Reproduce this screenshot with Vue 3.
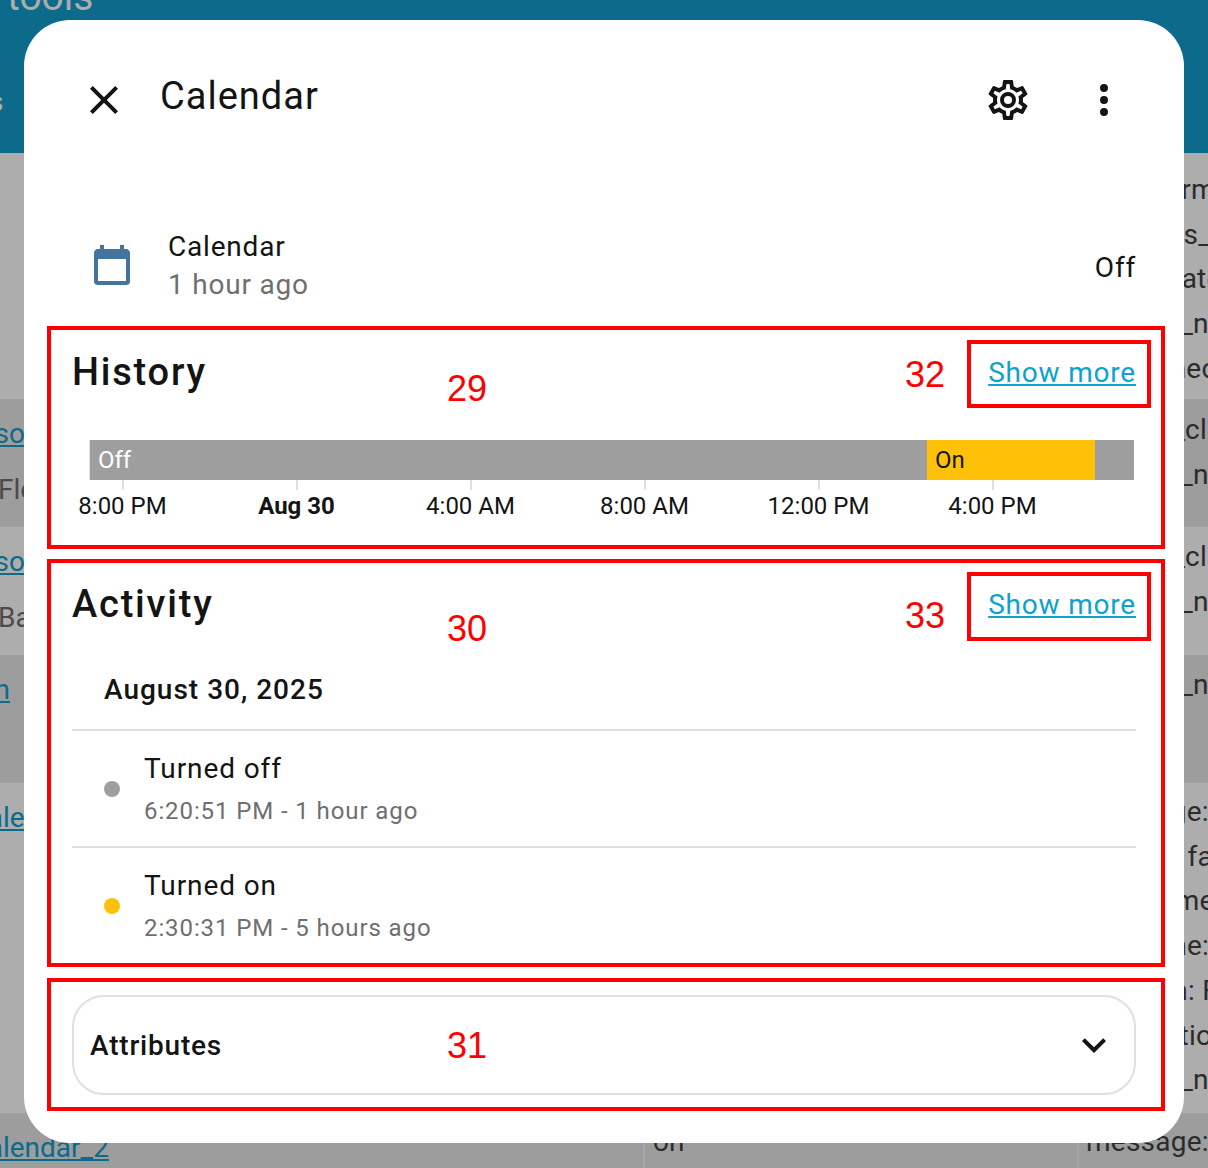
<template>
  <div class="page">
    <!-- page behind the dialog -->
    <header class="top">
      <div class="top-title">tools</div>
      <div class="top-tab">s</div>
    </header>
    <div class="rows">
      <div v-for="(row, i) in rows" :key="i" class="row" :class="{ alt: row.alt }" :style="{ height: row.height + 'px' }">
        <div class="cell first">
          <a class="bg-link">{{ row.link }}</a>
          <div class="bg-name">{{ row.name }}</div>
        </div>
        <div class="cell second" :style="{ paddingTop: row.pad + 'px' }">{{ row.state }}</div>
        <div class="cell third" :style="{ paddingTop: row.pad + 'px' }">
          <div v-for="line in row.attrs" :key="line">{{ line }}</div>
        </div>
      </div>
    </div>

    <!-- dialog -->
    <section class="dialog">
      <div class="dialog-head">
        <svg class="icon close" viewBox="0 0 24 24"><path :d="icons.close" /></svg>
        <div class="dialog-title">Calendar</div>
        <svg class="icon gear" viewBox="0 0 24 24"><path :d="icons.cog" /></svg>
        <svg class="icon dots" viewBox="0 0 24 24"><path :d="icons.dots" /></svg>
      </div>

      <div class="state-row">
        <svg class="icon cal" viewBox="0 0 24 24"><path :d="icons.calendar" /></svg>
        <div class="state-text">
          <div class="state-name">Calendar</div>
          <div class="state-time">1 hour ago</div>
        </div>
        <div class="state-value">Off</div>
      </div>

      <div class="box history">
        <div class="box-head">
          <h2>History</h2>
          <div class="more-box"><a class="more">Show more</a></div>
        </div>
        <div class="chart">
          <div class="track">
            <div v-for="seg in segments" :key="seg.left" class="seg" :class="seg.kind" :style="{ width: seg.width + 'px' }">{{ seg.label }}</div>
          </div>
          <div class="axis">
            <div v-for="t in ticks" :key="t.label" class="tick" :class="{ strong: t.strong }">{{ t.label }}</div>
          </div>
        </div>
        <span class="num n29">29</span>
        <span class="num n32">32</span>
      </div>

      <div class="box activity">
        <div class="box-head">
          <h2>Activity</h2>
          <div class="more-box"><a class="more">Show more</a></div>
        </div>
        <div class="day">August 30, 2025</div>
        <div v-for="item in events" :key="item.title" class="event">
          <span class="dot" :class="item.kind"></span>
          <div class="event-text">
            <div class="event-title">{{ item.title }}</div>
            <div class="event-time">{{ item.time }}</div>
          </div>
        </div>
        <span class="num n30">30</span>
        <span class="num n33">33</span>
      </div>

      <div class="box attrs">
        <div class="expander">
          <span>Attributes</span>
          <svg class="icon chev" viewBox="0 0 24 24"><path :d="icons.chevron" /></svg>
        </div>
        <span class="num n31">31</span>
      </div>
    </section>
  </div>
</template>

<script setup>
const icons = {
  close: "M19,6.41L17.59,5L12,10.59L6.41,5L5,6.41L10.59,12L5,17.59L6.41,19L12,13.41L17.59,19L19,17.59L13.41,12L19,6.41Z",
  cog: "M12,8A4,4 0 0,1 16,12A4,4 0 0,1 12,16A4,4 0 0,1 8,12A4,4 0 0,1 12,8M12,10A2,2 0 0,0 10,12A2,2 0 0,0 12,14A2,2 0 0,0 14,12A2,2 0 0,0 12,10M10,22C9.75,22 9.54,21.82 9.5,21.58L9.13,18.93C8.5,18.68 7.96,18.34 7.44,17.94L4.95,18.95C4.73,19.03 4.46,18.95 4.34,18.73L2.34,15.27C2.21,15.05 2.27,14.78 2.46,14.63L4.57,12.97L4.5,12L4.57,11L2.46,9.37C2.27,9.22 2.21,8.95 2.34,8.73L4.34,5.27C4.46,5.05 4.73,4.96 4.95,5.05L7.44,6.05C7.96,5.66 8.5,5.32 9.13,5.07L9.5,2.42C9.54,2.18 9.75,2 10,2H14C14.25,2 14.46,2.18 14.5,2.42L14.87,5.07C15.5,5.32 16.04,5.66 16.56,6.05L19.05,5.05C19.27,4.96 19.54,5.05 19.66,5.27L21.66,8.73C21.79,8.95 21.73,9.22 21.54,9.37L19.43,11L19.5,12L19.43,13L21.54,14.63C21.73,14.78 21.79,15.05 21.66,15.27L19.66,18.73C19.54,18.95 19.27,19.04 19.05,18.95L16.56,17.95C16.04,18.34 15.5,18.68 14.87,18.93L14.5,21.58C14.46,21.82 14.25,22 14,22H10M11.25,4L10.88,6.61C9.68,6.86 8.62,7.5 7.85,8.39L5.44,7.35L4.69,8.65L6.8,10.2C6.4,11.37 6.4,12.64 6.8,13.8L4.68,15.36L5.43,16.66L7.86,15.62C8.63,16.5 9.68,17.14 10.87,17.38L11.24,20H12.76L13.13,17.39C14.32,17.14 15.37,16.5 16.14,15.62L18.57,16.66L19.32,15.36L17.2,13.81C17.6,12.64 17.6,11.37 17.2,10.2L19.31,8.65L18.56,7.35L16.15,8.39C15.38,7.5 14.32,6.86 13.12,6.62L12.75,4H11.25Z",
  dots: "M12,16A2,2 0 0,1 14,18A2,2 0 0,1 12,20A2,2 0 0,1 10,18A2,2 0 0,1 12,16M12,10A2,2 0 0,1 14,12A2,2 0 0,1 12,14A2,2 0 0,1 10,12A2,2 0 0,1 12,10M12,4A2,2 0 0,1 14,6A2,2 0 0,1 12,8A2,2 0 0,1 10,6A2,2 0 0,1 12,4Z",
  calendar: "M19,19H5V8H19M16,1V3H8V1H6V3H5C3.89,3 3,3.89 3,5V19A2,2 0 0,0 5,21H19A2,2 0 0,0 21,19V5C21,3.89 20.1,3 19,3H18V1",
  chevron: "M7.41,8.58L12,13.17L16.59,8.58L18,10L12,16L6,10L7.41,8.58Z",
};

const rows = [
  { height: 246, pad: 15, link: "", name: "", state: "", attrs: ["tone_format", "windows_state", "coordinate", "friendly_name", "disconnected"] },
  { height: 128, pad: 9, alt: true, link: "icso", name: "Flo", state: "", attrs: ["sensor_class", "friendly_name"] },
  { height: 128, pad: 8, link: "icso", name: "Ba", state: "", attrs: ["sensor_class", "friendly_name"] },
  { height: 128, pad: 8, alt: true, link: "icn", name: "", state: "", attrs: ["friendly_name"] },
  {
    height: 330,
    pad: 7,
    link: "calendar",
    name: "",
    state: "",
    attrs: ["message:", "all_day: false", "start_time:", "end_time:", "location: F", "description:", "friendly_name"],
  },
  { height: 55, pad: 7, alt: true, link: "calendar_2", name: "", state: "on", attrs: ["message:"] },
];

const segments = [
  { left: 0, width: 837, kind: "off", label: "Off" },
  { left: 837, width: 168, kind: "on", label: "On" },
  { left: 1005, width: 39, kind: "off", label: "" },
];

const ticks = [
  { label: "8:00 PM" },
  { label: "Aug 30", strong: true },
  { label: "4:00 AM" },
  { label: "8:00 AM" },
  { label: "12:00 PM" },
  { label: "4:00 PM" },
];

const events = [
  { title: "Turned off", time: "6:20:51 PM - 1 hour ago", kind: "off" },
  { title: "Turned on", time: "2:30:31 PM - 5 hours ago", kind: "on" },
];
</script>

<style>
html,
body {
  margin: 0;
  overflow: hidden;
}
</style>

<style scoped>
.page {
  position: relative;
  width: 1208px;
  height: 1168px;
  overflow: hidden;
  background: #adadad;
  font-family: Roboto, "Liberation Sans", sans-serif;
  color: #141414;
}

.top {
  height: 153px;
  background: #0c6a8a;
  color: #adadad;
  overflow: hidden;
}
.top-title {
  margin: -25px 0 0 7px;
  font-size: 39px;
  line-height: 44px;
}
.top-tab {
  margin: 67px 0 0 -11px;
  font-size: 28px;
  line-height: 32px;
}

.row {
  display: grid;
  grid-template-columns: 643px 434px 1fr;
  box-sizing: border-box;
  font-size: 28px;
  line-height: 44.7px;
  color: #2b2b2b;
}
.row.alt {
  background: #9d9d9d;
}
.cell {
  padding-top: 13px;
  box-sizing: border-box;
  overflow: hidden;
  white-space: nowrap;
}
.first {
  margin-left: -27px;
}
.second {
  padding-left: 8px;
  border-left: 2px solid #a6a6a6;
}
.third {
  padding-left: 7px;
  border-left: 2px solid #a6a6a6;
  letter-spacing: 0.25px;
}
.bg-link {
  display: block;
  min-height: 44.5px;
  color: #0c6a8a;
  text-decoration: underline;
}
.bg-name {
  margin-left: 25px;
  margin-top: 11px;
  color: #4a4a4a;
}

.dialog {
  position: absolute;
  top: 20px;
  left: 24px;
  width: 1160px;
  height: 1123px;
  box-sizing: border-box;
  padding: 0 19px 0 23px;
  background: #fff;
  border-radius: 46px;
  overflow: hidden;
}

.icon {
  display: block;
  width: 48px;
  height: 48px;
  fill: #141414;
  flex: none;
}

.dialog-head {
  display: flex;
  align-items: center;
  height: 160px;
  margin: 0 -19px 0 -23px;
  padding-left: 56px;
}
.dialog-title {
  flex: 1;
  margin: -8px 0 0 32px;
  font-size: 38px;
  letter-spacing: 1px;
}
.gear {
  margin-right: 48px;
}
.dots {
  margin-right: 56px;
}

.state-row {
  display: flex;
  align-items: center;
  height: 80px;
  margin: 47px 29px 19px 41px;
  font-size: 28px;
  letter-spacing: 0.8px;
}
.cal {
  fill: #44739e;
}
.state-text {
  flex: 1;
  margin: -2px 0 0 32px;
}
.state-name {
  line-height: 38px;
}
.state-time {
  line-height: 38px;
  color: #6f6f6f;
}

.box {
  position: relative;
  box-sizing: border-box;
  border: 4px solid #f00;
  padding: 0 25px 0 21px;
}
.box-head {
  display: flex;
  align-items: center;
  justify-content: space-between;
  height: 68px;
  margin: 10px -15px 0 0;
}
.box-head h2 {
  margin: -4px 0 0;
  font-size: 38px;
  font-weight: 500;
  letter-spacing: 1.8px;
}
.more-box {
  display: flex;
  align-items: center;
  box-sizing: border-box;
  height: 68px;
  padding: 0 11px 4px 17px;
  border: 4px solid #f00;
}
.more {
  font-size: 28px;
  letter-spacing: 0.8px;
  color: #0ea2cf;
  text-decoration: underline;
}

.num {
  position: absolute;
  font-family: "Liberation Sans", sans-serif;
  font-size: 36px;
  line-height: 40px;
  color: #f00;
}
.n29 {
  left: 396px;
  top: 39px;
}
.n32 {
  left: 854px;
  top: 25px;
}
.n30 {
  left: 396px;
  top: 46px;
}
.n33 {
  left: 854px;
  top: 33px;
}
.n31 {
  left: 396px;
  top: 44px;
}

.history {
  height: 223px;
  margin-bottom: 10px;
}
.chart {
  margin: 32px -23px 0 18px;
}
.track {
  display: flex;
  height: 40px;
  font-size: 24px;
  line-height: 41px;
  border-left: 1px solid #e0e0e0;
  margin-left: -1px;
}
.seg {
  padding-left: 8px;
  box-sizing: border-box;
}
.seg.off {
  background: #9e9e9e;
  color: #fff;
}
.seg.on {
  background: #ffc107;
  color: #141414;
}
.axis {
  display: flex;
  margin-left: -54px;
}
.tick {
  width: 174px;
  flex: none;
  position: relative;
  padding: 12px 1px 0 0;
  box-sizing: border-box;
  text-align: center;
  font-size: 24px;
  line-height: 29px;
}
.tick::before {
  content: "";
  position: absolute;
  top: 0;
  left: 86px;
  width: 2px;
  height: 10px;
  background: #e0e0e0;
}
.tick.strong {
  font-weight: 700;
}

.activity {
  height: 408px;
  margin-bottom: 11px;
}
.activity .box-head {
  margin-top: 9px;
  height: 69px;
}
.activity .box-head h2 {
  margin-top: -6px;
}
.activity .more-box {
  height: 69px;
}
.day {
  height: 90px;
  padding-left: 32px;
  box-sizing: border-box;
  padding-top: 29px;
  font-size: 28px;
  line-height: 40px;
  font-weight: 500;
  letter-spacing: 1px;
  border-bottom: 2px solid #e0e0e0;
}
.event {
  display: flex;
  align-items: center;
  height: 115px;
  box-sizing: border-box;
  padding-left: 32px;
}
.event + .event {
  height: 117px;
  border-top: 2px solid #e0e0e0;
}
.dot {
  width: 16px;
  height: 16px;
  margin-right: 24px;
  border-radius: 50%;
}
.dot.off {
  background: #9e9e9e;
}
.dot.on {
  background: #ffc107;
}
.event-text {
  padding-top: 3px;
}
.event-title {
  font-size: 28px;
  line-height: 40px;
  letter-spacing: 0.9px;
}
.event-time {
  margin-top: 2px;
  font-size: 24px;
  line-height: 40px;
  letter-spacing: 0.9px;
  color: #6f6f6f;
}

.attrs {
  height: 133px;
  padding-top: 13px;
}
.expander {
  display: flex;
  align-items: center;
  justify-content: space-between;
  height: 100px;
  box-sizing: border-box;
  padding: 0 16px;
  border: 2px solid #e0e0e0;
  border-radius: 32px;
  font-size: 28px;
  font-weight: 500;
  letter-spacing: 0.8px;
}
</style>
